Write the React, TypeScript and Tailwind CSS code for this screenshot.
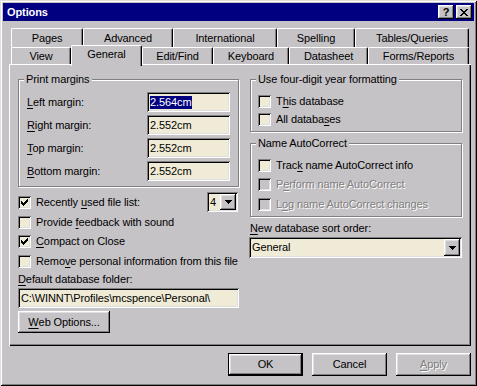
import React from 'react';

const face = 'bg-[#c6c3c6]';
const field = 'bg-[#efebd6]';
const raised = 'shadow-[inset_-1px_-1px_#000,inset_1px_1px_#fff,inset_-2px_-2px_#808080,inset_2px_2px_#dfdfdf]';
const sunken = 'shadow-[inset_1px_1px_#808080,inset_-1px_-1px_#fff,inset_2px_2px_#000,inset_-2px_-2px_#dfdfdf]';
const disabledText = 'text-[#808080] [text-shadow:1px_1px_0_#fff]';

type Kids = { children?: React.ReactNode };

// access key underline
const K = ({ children }: Kids) => <span className="underline decoration-1 underline-offset-[2px]">{children}</span>;

const CheckMark = () => <svg width="7" height="7" viewBox="0 0 7 7" shapeRendering="crispEdges">
    <rect x="0" y="2" width="1" height="3" />
    <rect x="1" y="3" width="1" height="3" />
    <rect x="2" y="4" width="1" height="3" />
    <rect x="3" y="3" width="1" height="3" />
    <rect x="4" y="2" width="1" height="3" />
    <rect x="5" y="1" width="1" height="3" />
    <rect x="6" y="0" width="1" height="3" />
  </svg>;

const DownArrow = () => <svg width="7" height="4" viewBox="0 0 7 4" shapeRendering="crispEdges">
    <rect x="0" y="0" width="7" height="1" />
    <rect x="1" y="1" width="5" height="1" />
    <rect x="2" y="2" width="3" height="1" />
    <rect x="3" y="3" width="1" height="1" />
  </svg>;

const CloseGlyph = () => <svg width="8" height="7" viewBox="0 0 8 7" shapeRendering="crispEdges">
    <rect x="0" y="0" width="2" height="1" /><rect x="6" y="0" width="2" height="1" />
    <rect x="1" y="1" width="2" height="1" /><rect x="5" y="1" width="2" height="1" />
    <rect x="2" y="2" width="4" height="1" />
    <rect x="3" y="3" width="2" height="1" />
    <rect x="2" y="4" width="4" height="1" />
    <rect x="1" y="5" width="2" height="1" /><rect x="5" y="5" width="2" height="1" />
    <rect x="0" y="6" width="2" height="1" /><rect x="6" y="6" width="2" height="1" />
  </svg>;

const Checkbox = ({ checked = false, disabled = false, className = '', children }: Kids & { checked?: boolean; disabled?: boolean; className?: string }) => <div className={`flex items-center ${className}`}>
    <div className={`w-[13px] h-[13px] shrink-0 flex items-center justify-center ${disabled ? face : field} ${sunken}`}>
      {checked && <CheckMark />}
    </div>
    <span className={`ml-[5px] leading-[13px] whitespace-nowrap ${disabled ? disabledText : ''}`}>{children}</span>
  </div>;

const TextField = ({ className = '', children }: Kids & { className?: string }) => <div className={`flex items-center pl-[3px] leading-[13px] whitespace-nowrap overflow-hidden ${field} ${sunken} ${className}`}>
    {children}
  </div>;

const Combo = ({ value, className = '' }: { value: string; className?: string }) => <div className={`flex items-stretch p-[2px] ${field} ${sunken} ${className}`}>
    <span className="flex-1 flex items-center pl-[1px] leading-[13px]">{value}</span>
    <div className={`w-[16px] flex items-center justify-center ${face} ${raised}`}>
      <DownArrow />
    </div>
  </div>;

const Button = ({ className = '', isDefault = false, disabled = false, children }: Kids & { className?: string; isDefault?: boolean; disabled?: boolean }) => <div className={`flex ${face} ${isDefault ? 'border border-black' : ''} ${className}`}>
    <div className={`flex-1 flex items-center justify-center leading-[13px] ${raised} ${disabled ? disabledText : ''}`}>
      {children}
    </div>
  </div>;

const Group = ({ label, className = '', children }: Kids & { label: string; className?: string }) => <div className={`relative border border-[#808080] shadow-[1px_1px_#fff,inset_1px_1px_#fff] ${className}`}>
    <span className={`absolute -top-[7px] left-[5px] px-[2px] leading-[13px] whitespace-nowrap ${face}`}>{label}</span>
    {children}
  </div>;

const tabBase = 'flex justify-center leading-[13px] border-l border-t border-r border-white border-r-black rounded-t-[2px] shadow-[inset_-1px_0_#808080]';

const backTabs = [
  { label: 'Pages', w: 'w-[72px]' },
  { label: 'Advanced', w: 'w-[90px]' },
  { label: 'International', w: 'w-[104px]' },
  { label: 'Spelling', w: 'w-[78px]' },
  { label: 'Tables/Queries', w: 'w-[114px]' }
];

const frontTabs = [
  { label: 'View', w: 'w-[60px]' },
  { label: 'General', w: 'w-[71px]', selected: true },
  { label: 'Edit/Find', w: 'w-[71px]' },
  { label: 'Keyboard', w: 'w-[76px]' },
  { label: 'Datasheet', w: 'w-[79px]' },
  { label: 'Forms/Reports', w: 'w-[101px]' }
];

const MarginRow = ({ label, value, selected = false }: { label: React.ReactNode; value: string; selected?: boolean }) => <div className="flex items-center h-[20px] pl-[8px]">
    <span className="w-[120px] leading-[13px]">{label}</span>
    <TextField className="w-[83px] h-[20px]">
      {selected ? <span className="bg-[#000080] text-white">{value}</span> : value}
    </TextField>
  </div>;

export default function App() {
  return <div className={`w-[477px] h-[386px] p-[3px] flex flex-col text-[11px] tracking-[-0.1px] text-black font-['Liberation_Sans',Arial,sans-serif] ${face} shadow-[inset_1px_1px_#dfdfdf,inset_-1px_-1px_#000,inset_2px_2px_#fff,inset_-2px_-2px_#808080]`}>
      {/* title bar */}
      <div className="h-[18px] shrink-0 bg-[#000080] flex items-center justify-between pl-[4px] pr-[2px]">
        <span className="text-white font-bold leading-[13px]">Options</span>
        <div className="flex gap-[2px]">
          <div className={`w-[16px] h-[14px] flex items-center justify-center font-bold leading-[11px] ${face} ${raised}`}>?</div>
          <div className={`w-[16px] h-[14px] flex items-center justify-center ${face} ${raised}`}>
            <CloseGlyph />
          </div>
        </div>
      </div>

      {/* tabs */}
      <div className="flex h-[19px] mt-[7px] ml-[8px]">
        {backTabs.map(t => <div key={t.label} className={`${tabBase} ${t.w} h-full pt-[3px]`}>{t.label}</div>)}
      </div>
      <div className="flex items-start h-[17px] ml-[8px]">
        {frontTabs.map(t => <div key={t.label} className={t.selected ? `${tabBase} ${t.w} relative z-10 -mt-[2px] h-[21px] pt-[2px] ${face}` : `${tabBase} ${t.w} h-full pt-[2px]`}>
            {t.label}
          </div>)}
      </div>

      {/* panel */}
      <div className="ml-[6px] w-[462px] h-[282px] shrink-0 flex pl-[9px] shadow-[inset_1px_1px_#fff,inset_-1px_-1px_#000,inset_-2px_-2px_#808080]">
        <div className="w-[221px] flex flex-col">
          <Group label="Print margins" className="mt-[15px] h-[108px] pt-[12px] flex flex-col gap-[3px]">
            <MarginRow label={<><K>L</K>eft margin:</>} value="2.564cm" selected />
            <MarginRow label={<><K>R</K>ight margin:</>} value="2.552cm" />
            <MarginRow label={<><K>T</K>op margin:</>} value="2.552cm" />
            <MarginRow label={<><K>B</K>ottom margin:</>} value="2.552cm" />
          </Group>
          <div className="mt-[5px] h-[20px] flex items-center justify-between">
            <Checkbox checked>Recently <K>u</K>sed file list:</Checkbox>
            <Combo value="4" className="w-[31px] h-[20px] mr-[1px]" />
          </div>
          <Checkbox className="h-[20px]">Provide <K>f</K>eedback with sound</Checkbox>
          <Checkbox checked className="h-[19px]"><K>C</K>ompact on Close</Checkbox>
          <Checkbox className="h-[20px]">Remo<K>v</K>e personal information from this file</Checkbox>
          <div className="h-[16px] flex items-center leading-[13px]"><K>D</K>efault database folder:</div>
          <TextField className="mt-[1px] h-[20px]">{'C:\\WINNT\\Profiles\\mcspence\\Personal\\'}</TextField>
          <Button className="mt-[3px] w-[92px] h-[22px]"><K>W</K>eb Options...</Button>
        </div>

        <div className="w-[212px] ml-[11px] flex flex-col">
          <Group label="Use four-digit year formatting" className="mt-[15px] h-[53px] pt-[12px] pl-[7px]">
            <Checkbox className="h-[18px]">T<K>h</K>is database</Checkbox>
            <Checkbox className="h-[18px]">All databa<K>s</K>es</Checkbox>
          </Group>
          <Group label="Name AutoCorrect" className="mt-[11px] h-[74px] pt-[11px] pl-[7px]">
            <Checkbox className="h-[20px]">Trac<K>k</K> name AutoCorrect info</Checkbox>
            <Checkbox disabled className="h-[19px]">P<K>e</K>rform name AutoCorrect</Checkbox>
            <Checkbox disabled className="h-[20px]">L<K>o</K>g name AutoCorrect changes</Checkbox>
          </Group>
          <div className="mt-[3px] h-[16px] flex items-center leading-[13px]"><K>N</K>ew database sort order:</div>
          <Combo value="General" className="mt-[1px] h-[21px] -ml-[1px] w-[213px]" />
        </div>
      </div>

      {/* dialog buttons */}
      <div className="mt-[7px] flex justify-end gap-[9px] pr-[3px]">
        <Button isDefault className="w-[75px] h-[23px]">OK</Button>
        <Button className="w-[75px] h-[23px]">Cancel</Button>
        <Button disabled className="w-[75px] h-[23px]"><K>A</K>pply</Button>
      </div>
    </div>;
}
